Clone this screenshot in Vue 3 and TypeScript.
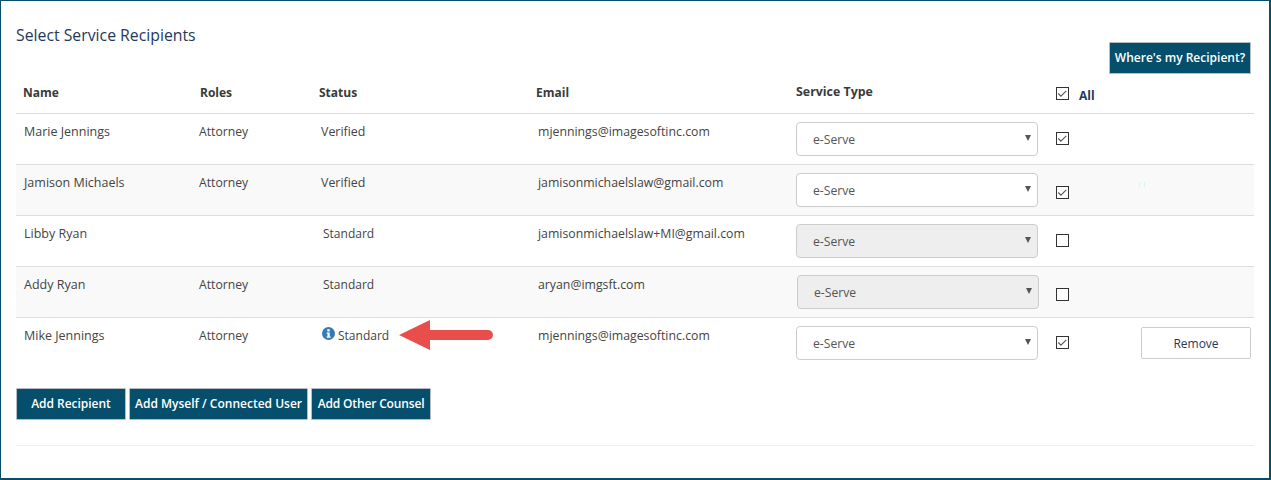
<script setup lang="ts">
interface Row {
  name: string
  role: string
  status: string
  email: string
  disabled: boolean
  checked: boolean
  low: boolean
  shift?: boolean
}
const rows: Row[] = [
  { name: 'Marie Jennings', role: 'Attorney', status: 'Verified', email: 'mjennings@imagesoftinc.com', disabled: false, checked: true, low: false },
  { name: 'Jamison Michaels', role: 'Attorney', status: 'Verified', email: 'jamisonmichaelslaw@gmail.com', disabled: false, checked: true, low: true },
  { name: 'Libby Ryan', role: '', status: 'Standard', email: 'jamisonmichaelslaw+MI@gmail.com', disabled: true, checked: false, low: false },
  { name: 'Addy Ryan', role: 'Attorney', status: 'Standard', email: 'aryan@imgsft.com', disabled: true, checked: false, low: true, shift: true },
  { name: 'Mike Jennings', role: 'Attorney', status: 'Standard', email: 'mjennings@imagesoftinc.com', disabled: false, checked: true, low: false }
]
</script>

<template>
  <div class="frame">
    <div class="top">
      <h2 class="title">Select Service Recipients</h2>
      <button class="btn where" type="button">Where's my Recipient?</button>
    </div>

    <div class="grid head">
      <div class="h-name">Name</div>
      <div class="h-role">Roles</div>
      <div class="h-status">Status</div>
      <div class="h-email">Email</div>
      <div class="h-type">Service Type</div>
      <div class="h-all">
        <span class="box head-box">
          <svg viewBox="0 0 13 13" width="11" height="11"><path d="M1.5 6.5 4.6 9.6 11 3.4" fill="none" stroke="#555" stroke-width="1.3" /></svg>
        </span>
        <span class="all-label">All</span>
      </div>
    </div>

    <div v-for="(r, i) in rows" :key="i" class="grid row" :class="{ striped: i % 2 === 1, last: i === rows.length - 1 }">
      <div class="c-name">{{ r.name }}</div>
      <div class="c-role">{{ r.role }}</div>
      <div class="c-status" :class="{ std: r.status === 'Standard' && i < 4, info: i === 4 }">
        <svg v-if="i === 4" class="info-icon" viewBox="0 0 13 13" width="13" height="13">
          <circle cx="6.5" cy="6.5" r="6.5" fill="#337ab7" />
          <rect x="5.3" y="2.2" width="2.4" height="2.2" fill="#fff" />
          <path d="M4.6 5.4h3.1v4h1v1.3H4.6V9.4h.9V6.7h-.9z" fill="#fff" />
        </svg>
        <span>{{ r.status }}</span>
        <svg v-if="i === 4" class="arrow" viewBox="0 0 94 32" width="94" height="32">
          <path d="M0 16 31 1v10h58a5 5 0 0 1 0 10H31v10z" fill="#ea4e4b" />
        </svg>
      </div>
      <div class="c-email">{{ r.email }}</div>
      <div class="c-type">
        <div class="select" :class="{ off: r.disabled, shift: r.shift }">
          <span class="sel-text">e-Serve</span>
          <i class="caret"></i>
        </div>
      </div>
      <div class="c-check">
        <span class="box" :class="{ low: r.low }">
          <svg v-if="r.checked" viewBox="0 0 13 13" width="11" height="11"><path d="M1.5 6.5 4.6 9.6 11 3.4" fill="none" stroke="#555" stroke-width="1.3" /></svg>
        </span>
        <span v-if="i === 1" class="speck"></span>
        <button v-if="i === 4" class="remove" type="button">Remove</button>
      </div>
    </div>

    <div class="actions">
      <button class="btn first" type="button">Add Recipient</button>
      <button class="btn second" type="button">Add Myself / Connected User</button>
      <button class="btn third" type="button">Add Other Counsel</button>
    </div>

    <div class="rule"></div>
  </div>
</template>

<style>
html, body { margin: 0; background: #fff; }
</style>

<style scoped>
.frame {
  box-sizing: border-box;
  width: 1271px;
  height: 480px;
  border-style: solid;
  border-color: #054f6d;
  border-width: 1px 2px 2px 1px;
  padding: 0 15px;
  font-family: "Open Sans", "Noto Sans", sans-serif;
  font-size: 12.4px;
  line-height: 18px;
  color: #333;
  overflow: hidden;
}
.top {
  display: flex;
  justify-content: space-between;
  align-items: flex-start;
  height: 70px;
  padding-right: 3px;
}
.title {
  margin: 24px 0 0;
  font-size: 15.8px;
  line-height: 20px;
  font-weight: 400;
  color: #23395b;
}
.btn {
  box-sizing: border-box;
  height: 32px;
  padding: 0;
  background: #054f6d;
  border: 1px solid #b5bcc2;
  border-radius: 1px;
  color: #fff;
  font-family: inherit;
  font-size: 12px;
  font-weight: 600;
  line-height: 18px;
}
.where { width: 142px; margin-top: 41px; }

.grid {
  display: grid;
  grid-template-columns: 183px 120px 217px 260px 260px 198px;
  width: 1238px;
}
.head {
  height: 43px;
  box-sizing: border-box;
  border-bottom: 1px solid #ddd;
  font-size: 12px;
  font-weight: 700;
  color: #3a3a3a;
  padding-top: 13px;
}
.h-name { padding-left: 7px; }
.h-role { padding-left: 1px; }
.h-type { margin-top: -1px; font-size: 12.4px; }
.h-all { display: flex; align-items: flex-start; gap: 10px; margin-top: -1px; }
.all-label { color: #23395b; margin-top: 4px; }
.head-box { margin-top: 4px; }

.row {
  height: 51px;
  box-sizing: border-box;
  border-bottom: 1px solid #ddd;
  color: #444;
}
.row.last { border-bottom: 0; }
.striped { background: #f9f9f9; }
.row > div { padding-top: 9px; }
.c-name { padding-left: 8px; font-size: 12.5px; }
.c-role { font-size: 12.2px; }
.c-status { padding-left: 2px; position: relative; }
.c-status.std { padding-left: 4px; font-size: 12px; }
.c-status.info { display: flex; align-items: flex-start; gap: 3px; padding-left: 3px; font-size: 12px; }
.info-icon { margin-top: 0; }
.arrow { position: absolute; left: 80px; top: 1px; }
.c-email { padding-left: 2px; font-size: 12.3px; }
.row > .c-type { padding-top: 8px; }
.row > .c-check { padding-top: 8px; }

.select {
  box-sizing: border-box;
  display: flex;
  justify-content: space-between;
  align-items: center;
  width: 242px;
  height: 34px;
  padding: 0 6px 0 16px;
  background: #fff;
  border: 1px solid #ccc;
  border-radius: 4px;
  color: #555;
}
.sel-text { padding-top: 1px; font-size: 12.2px; }
.select.off { background: #eee; }
.select.shift { margin-left: 1px; }
.caret {
  width: 0;
  height: 0;
  margin-bottom: 2px;
  border-left: 3px solid transparent;
  border-right: 3px solid transparent;
  border-top: 6px solid #555;
}

.c-check { position: relative; }
.box {
  box-sizing: border-box;
  display: flex;
  align-items: center;
  justify-content: center;
  width: 13px;
  height: 13px;
  border: 1px solid #333;
  background: #fff;
}
.c-check .box { margin-top: 10px; }
.c-check .box.low { margin-top: 13px; }
.speck {
  position: absolute;
  left: 83px;
  top: 17px;
  width: 4px;
  height: 5px;
  border-left: 1px solid #d8f5f5;
  border-right: 1px solid #d8f5f5;
}
.remove {
  position: absolute;
  left: 85px;
  top: 9px;
  box-sizing: border-box;
  width: 110px;
  height: 32px;
  background: #fff;
  border: 1px solid #ccc;
  border-radius: 2px;
  color: #23395b;
  font-family: inherit;
  font-size: 12px;
}

.actions {
  display: flex;
  gap: 3px;
  margin-top: 19px;
}
.first { width: 110px; letter-spacing: -0.03px; }
.second { width: 179px; }
.third { width: 120px; letter-spacing: -0.15px; }
.rule {
  width: 1238px;
  height: 1px;
  margin-top: 25px;
  background: #eee;
}
</style>
